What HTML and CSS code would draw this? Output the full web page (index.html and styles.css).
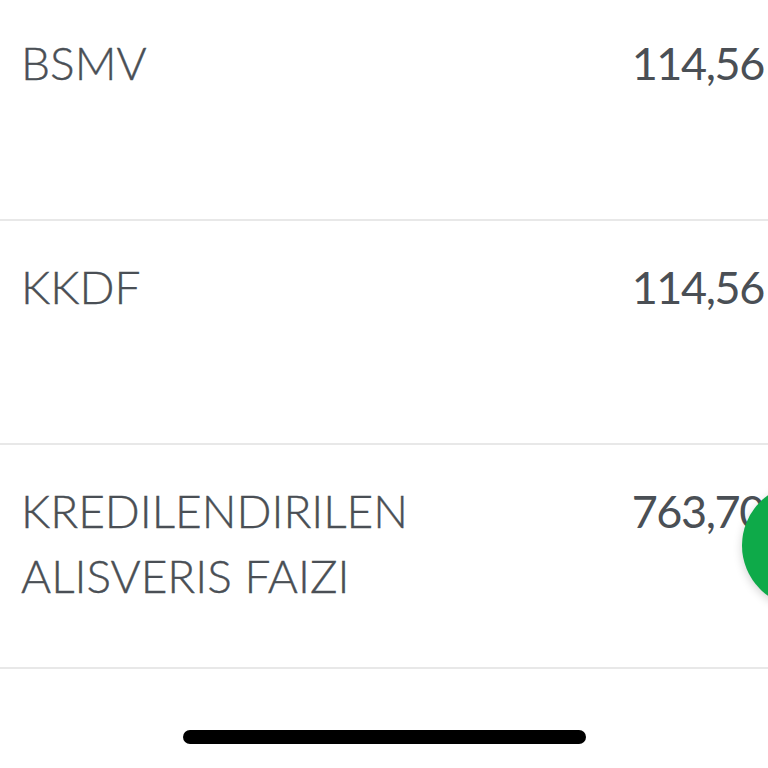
FILE: index.html
```html
<!DOCTYPE html>
<html>
<head>
<meta charset="utf-8">
<link rel="stylesheet" href="styles.css">
</head>
<body>
<div class="screen">
  <div class="list">
    <div class="row first">
      <div class="label">BSMV</div>
      <div class="value">114,56</div>
    </div>
    <div class="row">
      <div class="label">KKDF</div>
      <div class="value">114,56</div>
    </div>
    <div class="row">
      <div class="label">KREDILENDIRILEN<br>ALISVERIS FAIZI</div>
      <div class="value">763,70</div>
    </div>
  </div>
  <div class="fab"></div>
  <div class="home-bar"><div class="home-indicator"></div></div>
</div>
</body>
</html>
```
FILE: styles.css
```css
* { box-sizing: border-box; }
html, body {
  margin: 0;
  padding: 0;
  background: #ffffff;
}
.screen {
  position: relative;
  width: 768px;
  height: 768px;
  overflow: hidden;
  background: #ffffff;
  font-family: Lato, "Open Sans", sans-serif;
  color: #4a4f55;
}
.list {
  margin-top: -3px;
}
.row {
  display: flex;
  justify-content: space-between;
  align-items: flex-start;
  height: 224px;
  padding: 33px 4px 0 21px;
  border-bottom: 2px solid #e8e8e8;
}
.label {
  font-size: 46px;
  font-weight: 300;
  line-height: 65px;
  -webkit-text-stroke: 0.4px #4a4f55;
}
.value {
  font-size: 45px;
  font-weight: 400;
  line-height: 65px;
  letter-spacing: -1.4px;
  padding-top: 1px;
}
.fab {
  position: absolute;
  left: 742px;
  top: 484px;
  width: 123px;
  height: 123px;
  border-radius: 50%;
  background: #0eaa49;
  box-shadow: 0 3px 10px rgba(0,0,0,0.18);
}
.home-bar {
  display: flex;
  justify-content: center;
  padding-top: 61px;
}
.home-indicator {
  width: 403px;
  height: 14px;
  border-radius: 7px;
  background: #000000;
}
```
